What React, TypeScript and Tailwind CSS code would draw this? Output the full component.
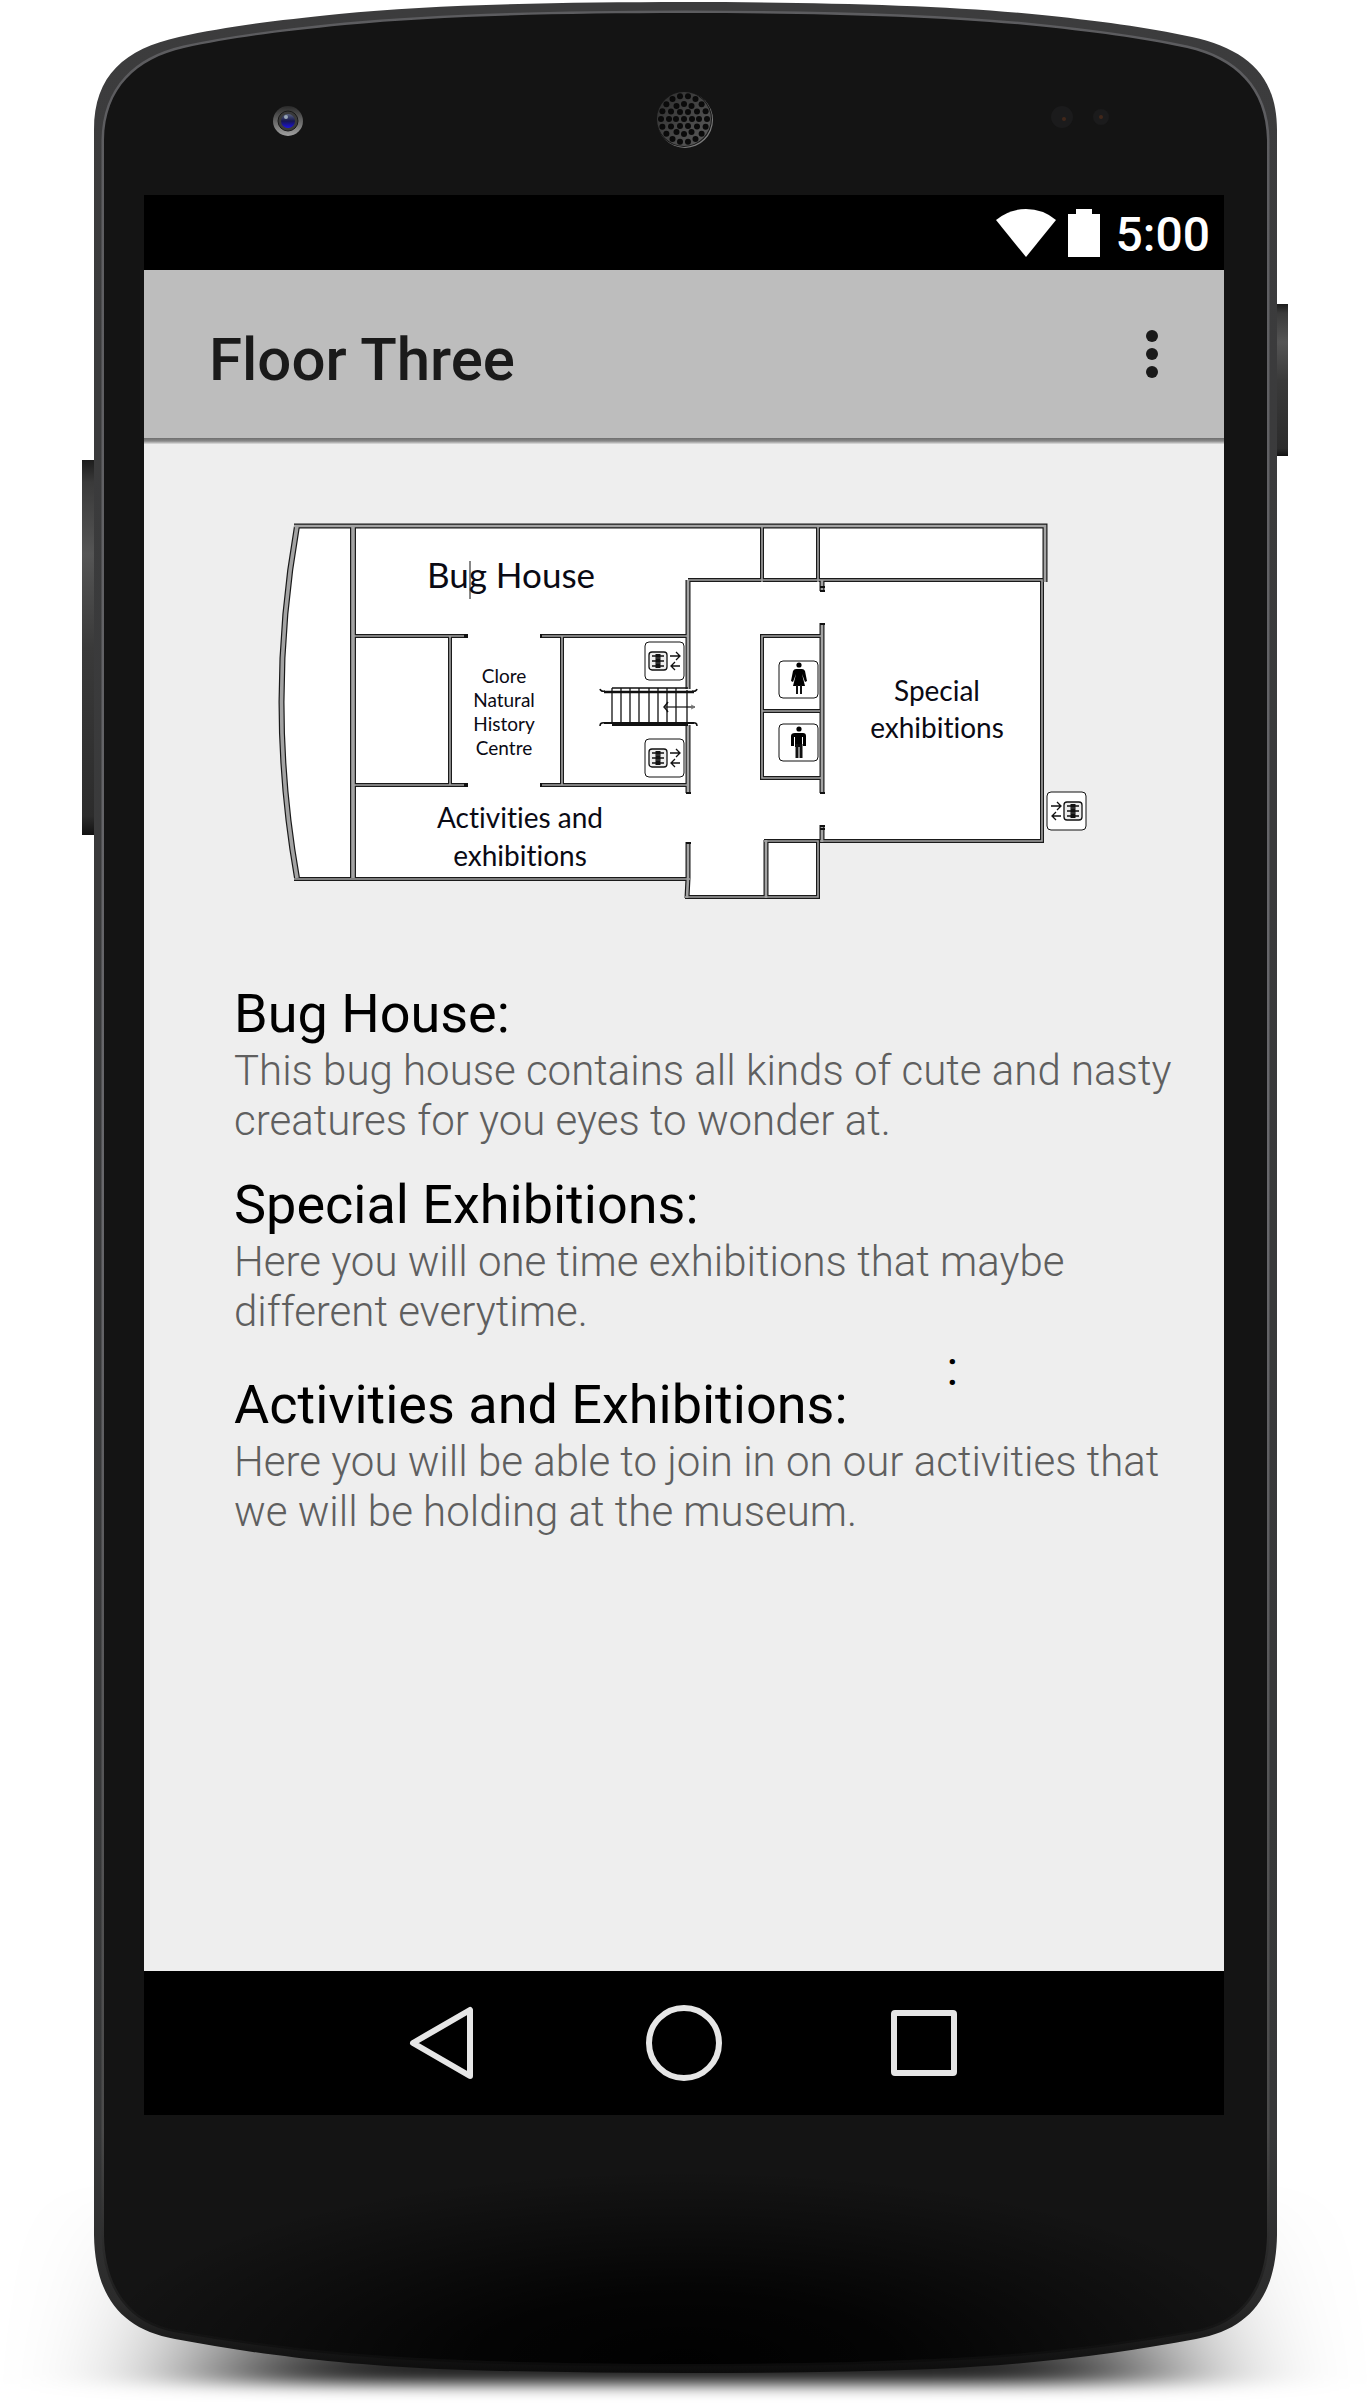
import React from "react";

type Wall = { d: string; w: number };

const OUTER =
  "M685 2C560 2 430 5 339 14C270 21 225 27 179 37C125 49 94 75 94 130L94 2235C95 2295 120 2329 175 2339C250 2353 330 2364 437 2369C520 2372 600 2373 685 2373C770 2373 850 2372 934 2369C1041 2364 1121 2353 1196 2339C1251 2329 1276 2295 1277 2235L1277 130C1277 75 1246 49 1192 37C1146 27 1101 21 1032 14C941 5 811 2 685 2Z";
const INNER =
  "M685 13C560 13 440 16 345 25C275 32 230 38 184 48C136 59 105 88 104 140L104 2235C105 2288 130 2322 177 2330C250 2343 340 2355 437 2359C520 2363 600 2364 685 2364C770 2364 850 2363 934 2359C1031 2355 1121 2343 1194 2330C1241 2322 1266 2288 1267 2235L1267 140C1266 88 1235 59 1187 48C1141 38 1096 32 1026 25C931 16 811 13 685 13Z";

const SPEAKER_RINGS = [
  { n: 1, r: 0 },
  { n: 6, r: 8 },
  { n: 12, r: 15 },
  { n: 18, r: 23 },
];

function PhoneBody() {
  return (
    <svg
      className="absolute inset-0 h-full w-full"
      viewBox="0 0 1370 2405"
      preserveAspectRatio="none"
      aria-hidden="true"
    >
      <defs>
        <linearGradient id="ground" x1="0" y1="0" x2="0" y2="1">
          <stop offset="0" stopColor="#000" stopOpacity="0" />
          <stop offset="0.6" stopColor="#000" stopOpacity="0.5" />
          <stop offset="1" stopColor="#000" stopOpacity="0.95" />
        </linearGradient>
        <filter id="soft" x="-40%" y="-40%" width="180%" height="180%">
          <feGaussianBlur stdDeviation="92 8" />
        </filter>
        <linearGradient id="rim" x1="0" y1="0" x2="0" y2="1">
          <stop offset="0" stopColor="#3c3c3d" />
          <stop offset="0.9" stopColor="#363738" />
          <stop offset="0.97" stopColor="#2b2b2b" />
          <stop offset="1" stopColor="#0c0c0c" />
        </linearGradient>
        <linearGradient id="rimLight" x1="0" y1="0" x2="0" y2="1">
          <stop offset="0" stopColor="#5c5c5f" />
          <stop offset="0.5" stopColor="#68686c" />
          <stop offset="0.9" stopColor="#4a4a4a" />
          <stop offset="1" stopColor="#0c0c0c" />
        </linearGradient>
        <radialGradient id="shade" gradientUnits="userSpaceOnUse" cx="0" cy="0" r="1" gradientTransform="translate(685 2360) scale(600 190)">
          <stop offset="0" stopColor="#000" stopOpacity="0.95" />
          <stop offset="0.35" stopColor="#000" stopOpacity="0.8" />
          <stop offset="0.7" stopColor="#000" stopOpacity="0.35" />
          <stop offset="1" stopColor="#000" stopOpacity="0" />
        </radialGradient>
        <linearGradient id="key" x1="0" y1="0" x2="0" y2="1">
          <stop offset="0" stopColor="#1c1c1c" />
          <stop offset="0.06" stopColor="#3a3a3a" />
          <stop offset="0.25" stopColor="#555" />
          <stop offset="0.5" stopColor="#3a3a3a" />
          <stop offset="0.95" stopColor="#2c2c2c" />
          <stop offset="1" stopColor="#111" />
        </linearGradient>
        <linearGradient id="lens" x1="0" y1="0" x2="0" y2="1">
          <stop offset="0" stopColor="#2a2a2a" />
          <stop offset="1" stopColor="#a0a0a0" />
        </linearGradient>
        <linearGradient id="glass" x1="0" y1="0" x2="0" y2="1">
          <stop offset="0" stopColor="#56607c" />
          <stop offset="0.5" stopColor="#16164e" />
          <stop offset="1" stopColor="#1c12e0" />
        </linearGradient>
        <linearGradient id="mesh" x1="0" y1="0" x2="1" y2="1">
          <stop offset="0" stopColor="#2c2c2c" />
          <stop offset="1" stopColor="#5c5c5c" />
        </linearGradient>
      </defs>

      <rect x="222" y="2180" width="926" height="204" fill="url(#ground)" filter="url(#soft)" />
      <rect x="82" y="460" width="14" height="375" fill="url(#key)" />
      <rect x="1275" y="304" width="13" height="152" fill="url(#key)" />
      <path d={OUTER} fill="url(#rim)" />
      <path d={INNER} fill="#141414" stroke="url(#rimLight)" strokeWidth="5" />
      <path d={INNER} fill="#141414" />
      <path d={INNER} fill="url(#shade)" />

      <circle cx="288" cy="121" r="15" fill="url(#lens)" />
      <circle cx="288" cy="121" r="10" fill="#3a3a3a" stroke="#1a1a1a" strokeWidth="1" />
      <circle cx="288" cy="121" r="7" fill="url(#glass)" />
      <circle cx="286" cy="117" r="2" fill="#9aa8b8" />

      <circle cx="685" cy="120" r="28" fill="#7a7a7a" />
      <circle cx="684" cy="119" r="28" fill="#161616" />
      <circle cx="684" cy="119" r="27" fill="url(#mesh)" />
      {SPEAKER_RINGS.map(({ n, r }) =>
        Array.from({ length: n }, (_, i) => {
          const a = (i / n) * Math.PI * 2;
          return <circle key={`${n}-${i}`} cx={684 + r * Math.cos(a)} cy={119 + r * Math.sin(a)} r="3" fill="#0a0a0a" />;
        })
      )}

      <circle cx="1062" cy="117" r="11" fill="#1b1b1c" />
      <circle cx="1064" cy="119" r="2" fill="#41271a" />
      <circle cx="1101" cy="117" r="8" fill="#1b1b1c" />
      <circle cx="1101" cy="117" r="2" fill="#41271a" />
    </svg>
  );
}

const WALLS: Wall[] = [
  { d: "M297 526Q266 702 297 878", w: 6 },
  { d: "M353 526V878", w: 6 },
  { d: "M354 636H467M354 785H467M541 636H688M541 785H688", w: 4 },
  { d: "M450 636V785M562 636V785", w: 4 },
  { d: "M294 879H690", w: 4 },
  { d: "M762 526V582M818 526V582", w: 4 },
  { d: "M294 526H1045V582", w: 5 },
  { d: "M688 690V580M688 724V793M688 842V878L687 898", w: 5 },
  { d: "M822 580V591M822 623V793M822 825V842", w: 5 },
  { d: "M820 841H1042V580H688", w: 4 },
  { d: "M822 636H762V778H822M762 711H820", w: 4 },
  { d: "M685 897H818V841H764", w: 4 },
  { d: "M766 840V898", w: 5 },
];

const STEPS = [612, 621, 630, 639, 649, 658, 667, 676];

function Lift({ x, y, flip = false }: { x: number; y: number; flip?: boolean }) {
  const box = flip ? 17 : 4;
  const arrow = flip ? 4 : 25;
  return (
    <g transform={`translate(${x} ${y})`} stroke="#111" fill="none">
      <rect x="0" y="0" width="39" height="38" rx="4" fill="#fff" strokeWidth="1" />
      <rect x={box} y="10" width="18" height="18" rx="3" strokeWidth="1.3" fill="#ededed" />
      <path d={`M${box + 3} 14h12M${box + 3} 19h12M${box + 3} 24h12`} strokeWidth="1.6" />
      <path d={`M${box + 9} 12v14`} strokeWidth="5" />
      <path d={`M${box + 7} 16h5M${box + 7} 21h5`} stroke="#777" strokeWidth="0.6" />
      <path d={`M${arrow} 14h10m-4 -4l4 4l-4 4M${arrow + 10} 24h-9m4 -4l-4 4l4 4`} strokeWidth="1.3" />
    </g>
  );
}

function FloorPlan() {
  return (
    <svg className="block h-auto w-full" viewBox="278 520 812 380" role="img" aria-label="Map of floor three">
      <path
        d="M295 524H1047V581H1043V842H820V898H686L689 880H295Q264 702 295 524Z"
        fill="#fff"
      />
      {WALLS.map((p) => (
        <path key={p.d} d={p.d} fill="none" stroke="#1a1a1a" strokeWidth={p.w} strokeLinecap="butt" />
      ))}
      {WALLS.map((p) => (
        <path key={p.d} d={p.d} fill="none" stroke="#a3a3a3" strokeWidth={p.w - 2.4} />
      ))}
      <path d="M465 634v4M467 634v4M541 634v4M465 783v4M467 783v4M541 783v4M686 793h5M686 843h5M820 591h5M820 587h5M820 624h5M820 793h5M820 826h5M820 829h5" stroke="#111" strokeWidth="2" />

      <rect x="602" y="689" width="92" height="36" fill="#fff" />
      <g stroke="#111" fill="none">
        <path d="M604 692H694" strokeWidth="2.4" />
        <path d="M612 688H688" strokeWidth="1.4" />
        <path d="M604 723H694" strokeWidth="2" />
        <path d="M612 725H688" strokeWidth="2" />
        <path d="M600 689q1 3 5 2M697 689q-1 3 -5 2M600 726q0 -4 5 -3M697 726q0 -4 -5 -3" strokeWidth="1.6" />
        {STEPS.map((x) => (
          <path key={x} d={`M${x} 688V724`} strokeWidth="1.3" />
        ))}
        <path d="M687 690V724" strokeWidth="1.3" />
        <path d="M665 707H695" strokeWidth="1.2" />
        <path d="M668 702q-2 3 -4 5q2 2 4 5" strokeWidth="1.4" />
        <path d="M691 705l4 2l-4 2" stroke="#777" strokeWidth="1" />
      </g>

      <Lift x={645} y={642} />
      <Lift x={645} y={739} />
      <Lift x={1047} y={792} flip />

      <g>
        <rect x="779" y="661" width="39" height="37" rx="4" fill="#fff" stroke="#111" />
        <circle cx="799" cy="665" r="2.6" />
        <path d="M796 669h6q2 0 3 2l2 10l-2 1l-3 -8l3 12h-12l3 -12l-3 8l-2 -1l2 -10q1 -2 3 -2Z" />
        <path d="M797 685V694M801 685V694" stroke="#111" strokeWidth="2" />
        <rect x="779" y="724" width="39" height="37" rx="4" fill="#fff" stroke="#111" />
        <circle cx="799" cy="729" r="2.6" />
        <path d="M795 733h8q3 0 3 3v10h-3v-9h-1v10h-7v-10h-1v9h-3v-10q0 -3 4 -3Z" />
        <path d="M797 744V758M801 744V758" stroke="#111" strokeWidth="3" />
      </g>

      <g className="font-['Lato',sans-serif] [font-variant-ligatures:none]" fill="#0a0a14" textAnchor="middle">
        <text x="511" y="588" fontSize="35">Bug House</text>
        <g fontSize="19">
          <text x="504" y="683">Clore</text>
          <text x="504" y="707">Natural</text>
          <text x="504" y="731">History</text>
          <text x="504" y="755">Centre</text>
        </g>
        <g fontSize="28">
          <text x="520" y="828">Activities and</text>
          <text x="520" y="866">exhibitions</text>
          <text x="937" y="701">Special</text>
          <text x="937" y="738">exhibitions</text>
        </g>
      </g>
      <path d="M470 561V599" stroke="#111" strokeWidth="1" />
    </svg>
  );
}

function Exhibit({ title, children }: { title: string; children: React.ReactNode }) {
  return (
    <section>
      <h2 className="text-[54px] leading-[64px] font-normal text-black">{title}</h2>
      <p className="text-[42px] leading-[50px] font-light text-[#5f5f5f]">{children}</p>
    </section>
  );
}

function StatusBar() {
  return (
    <div className="flex h-[75px] items-center justify-end gap-3 bg-black pr-[14px] text-white">
      <svg className="h-12 w-[60px]" viewBox="0 0 60 48" aria-hidden="true">
        <path d="M30 48L0 11Q13 0 30 0Q47 0 60 11Z" fill="#fff" />
      </svg>
      <svg className="h-12 w-8" viewBox="0 0 32 48" aria-hidden="true">
        <path d="M8 0H24V5H32V48H0V5H8Z" fill="#fff" />
      </svg>
      <time className="pt-1 pl-1 text-[48px] leading-[56px] font-medium">5:00</time>
    </div>
  );
}

export default function App() {
  return (
    <div className="relative flex min-h-screen flex-col bg-white pt-[195px] pr-[146px] pb-[290px] pl-[144px] font-['Roboto',sans-serif]">
      <PhoneBody />
      <div className="relative flex flex-1 flex-col">
        <StatusBar />

        <header className="flex h-[168px] items-center justify-between bg-[#bdbdbd] pr-[48px] pl-[65px]">
          <h1 className="pt-3 text-[60px] leading-[70px] font-medium text-[#1a1a1a]">Floor Three</h1>
          <button type="button" aria-label="More options" className="flex h-24 w-12 items-center justify-center">
            <svg className="h-12 w-3" viewBox="0 0 12 48" fill="#1a1a1a" aria-hidden="true">
              <circle cx="6" cy="6" r="6" />
              <circle cx="6" cy="24" r="6" />
              <circle cx="6" cy="42" r="6" />
            </svg>
          </button>
        </header>
        <div className="h-[6px] bg-linear-to-b from-[#6e6e6e] via-[#888888] to-[#e0e0e0]" />

        <main className="flex-1 bg-[#eeeeee] pt-[76px]">
          <figure className="px-[134px]">
            <FloorPlan />
          </figure>
          <div className="flex flex-col pt-[82px] pr-6 pl-[90px]">
            <Exhibit title="Bug House:">
              This bug house contains all kinds of cute and nasty creatures for you eyes to wonder at.
            </Exhibit>
            <div className="h-[27px]" />
            <Exhibit title="Special Exhibitions:">
              Here you will one time exhibitions that maybe different everytime.
            </Exhibit>
            <p className="h-[36px] pr-[242px] text-right text-[48px] leading-[64px] font-normal text-black">:</p>
            <Exhibit title="Activities and Exhibitions:">
              Here you will be able to join in on our activities that we will be holding at the museum.
            </Exhibit>
          </div>
        </main>

        <nav className="flex h-[144px] items-center justify-center gap-40 bg-black" aria-label="System navigation">
          <button type="button" aria-label="Back">
            <svg className="h-20 w-20" viewBox="0 0 80 80" fill="none" stroke="#e6e6e6" strokeWidth="6" strokeLinejoin="round" aria-hidden="true">
              <path d="M9 40L66 7V73Z" />
            </svg>
          </button>
          <button type="button" aria-label="Home">
            <svg className="h-20 w-20" viewBox="0 0 80 80" fill="none" stroke="#e6e6e6" strokeWidth="6" aria-hidden="true">
              <circle cx="40" cy="40" r="35" />
            </svg>
          </button>
          <button type="button" aria-label="Recent apps">
            <svg className="h-20 w-20" viewBox="0 0 80 80" fill="none" stroke="#e6e6e6" strokeWidth="6" strokeLinejoin="round" aria-hidden="true">
              <rect x="10" y="10" width="60" height="60" rx="1" />
            </svg>
          </button>
        </nav>
      </div>
    </div>
  );
}
